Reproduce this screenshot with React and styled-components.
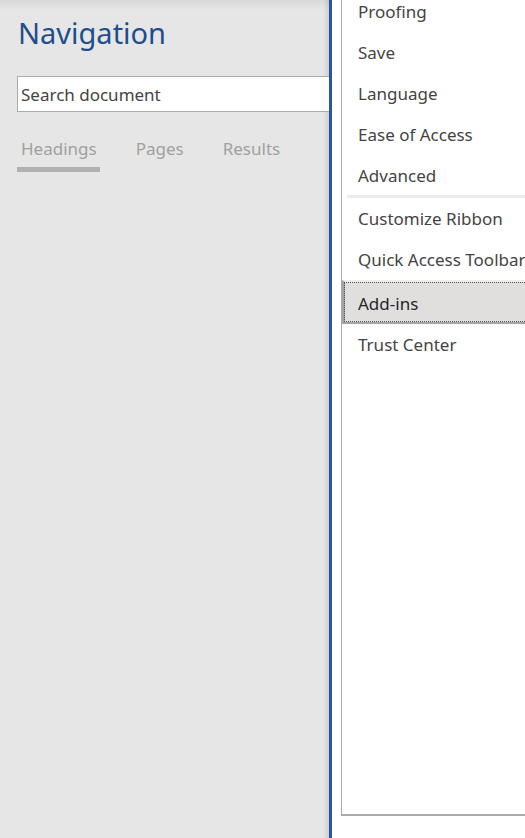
import React from "react";
import styled, { createGlobalStyle } from "styled-components";

const Global = createGlobalStyle`
  html, body { margin: 0; padding: 0; height: 100%; overflow: hidden; background: #fff; }
  #root { height: 100%; }
  * { box-sizing: border-box; }
`;

const Page = styled.div`
  display: flex;
  width: 525px;
  height: 838px;
  overflow: hidden;
  font-family: "Noto Sans", "Open Sans", sans-serif;
`;

const NavPane = styled.div`
  width: 329px;
  flex: none;
  background: linear-gradient(to right, #e6e6e6 0, #e6e6e6 323px, #dcdcdc 326px, #cdcdcd 329px);
  position: relative;
  padding: 14px 0 0 17px;
  display: flex;
  flex-direction: column;
  &::before {
    content: "";
    position: absolute;
    left: 0; right: 0; top: 0; height: 10px;
    background: linear-gradient(to bottom, rgba(0,0,0,0.06), rgba(0,0,0,0));
  }
`;

const Title = styled.div`
  font-size: 29px;
  font-weight: 400;
  color: #1e4e8c;
  line-height: 38px;
  margin-left: 1px;
`;

const Search = styled.div`
  margin-top: 24px;
  height: 36px;
  background: #fff;
  border: 1px solid #ababab;
  border-right: none;
  display: flex;
  align-items: center;
  padding-left: 3px;
  font-size: 17px;
  color: #444;
`;

const Tabs = styled.div`
  display: flex;
  margin-top: 24px;
`;

const Tab = styled.div`
  font-size: 17px;
  color: #a0a0a0;
  padding: 0 3px 0 4px;
  margin-right: ${p => p.$gap}px;
  height: 26px;
  line-height: 26px;
  position: relative;
  &::after {
    content: "";
    display: ${p => (p.$active ? "block" : "none")};
    position: absolute;
    left: 0; right: 0; top: 31px;
    height: 5px;
    background: #b1b1b1;
  }
`;

const Divider = styled.div`
  width: 3px;
  flex: none;
  background: #2b579a;
`;

const RightPane = styled.div`
  flex: 1;
  min-width: 0;
  background: #fff;
  padding-left: 9px;
  padding-bottom: 22px;
  display: flex;
  flex-direction: column;
`;

const List = styled.div`
  flex: 1;
  margin-top: -9px;
  margin-right: -20px;
  border-left: 1px solid #ababab;
  border-bottom: 2px solid #ababab;
  display: flex;
  flex-direction: column;
  padding-left: 1px;
`;

const Item = styled.div`
  height: 41px;
  flex: none;
  display: flex;
  align-items: center;
  padding-left: 15px;
  font-size: 17px;
  color: #444;
  white-space: nowrap;
`;

const Selected = styled(Item)`
  height: 44px;
  background: #e0dfde;
  border-top: 2px solid #ededed;
  border-left: 3px solid #a4a4a4;
  border-bottom: 2px solid #a4a4a4;
  color: #262626;
  outline: 1px dotted #555;
  outline-offset: -3px;
  margin-left: -1px;
  padding-left: 13px;
  padding-top: 2px;
`;

const Sep = styled.div`
  height: 3px;
  flex: none;
  margin: -1px 0 0 4px;
  background: #ebebeb;
`;

export default function App() {
  const top = ["Proofing", "Save", "Language", "Ease of Access", "Advanced"];
  return (
    <Page>
      <Global />
      <NavPane>
        <Title>Navigation</Title>
        <Search>Search document</Search>
        <Tabs>
          <Tab $active $gap={32}>Headings</Tab>
          <Tab $gap={32}>Pages</Tab>
          <Tab $gap={0}>Results</Tab>
        </Tabs>
      </NavPane>
      <Divider />
      <RightPane>
        <List>
          {top.map(t => (
            <Item key={t}>{t}</Item>
          ))}
          <Sep />
          <Item>Customize Ribbon</Item>
          <Item>Quick Access Toolbar</Item>
          <Selected>Add-ins</Selected>
          <Item>Trust Center</Item>
        </List>
      </RightPane>
    </Page>
  );
}
